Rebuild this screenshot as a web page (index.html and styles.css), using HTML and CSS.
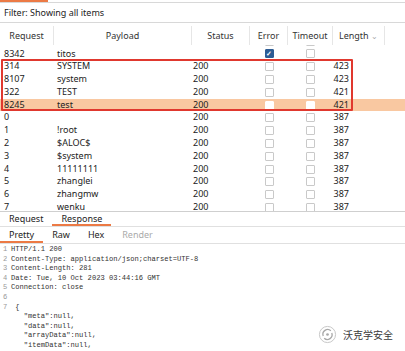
FILE: index.html
```html
<!DOCTYPE html>
<html lang="en">
<head>
  <meta charset="UTF-8" />
  <meta name="viewport" content="width=device-width, initial-scale=1.0"/>
  <title>Intruder results</title>
  <link rel="stylesheet" href="styles.css">
</head>
<body>
  <div class="window">
    <div class="topline"></div>
    <div class="filter">Filter: Showing all items</div>

    <div class="results">
      <div class="thead">
        <div>Request</div>
        <div>Payload</div>
        <div>Status</div>
        <div>Error</div>
        <div>Timeout</div>
        <div>Length <span class="chev">&#8964;</span></div>
      </div>
      <div class="tbody">
        <div class="rows">
          <div class="row"><div>4112</div><div>stanford</div><div>200</div><div><span class="box"></span></div><div><span class="box"></span></div><div class="len">387</div></div>
          <div class="row"><div>8342</div><div>titos</div><div></div><div><span class="box checked">&#10003;</span></div><div><span class="box"></span></div><div class="len"></div></div>
          <div class="row"><div>314</div><div>SYSTEM</div><div>200</div><div><span class="box"></span></div><div><span class="box"></span></div><div class="len">423</div></div>
          <div class="row"><div>8107</div><div>system</div><div>200</div><div><span class="box"></span></div><div><span class="box"></span></div><div class="len">423</div></div>
          <div class="row"><div>322</div><div>TEST</div><div>200</div><div><span class="box"></span></div><div><span class="box"></span></div><div class="len">421</div></div>
          <div class="row selected"><div>8245</div><div>test</div><div>200</div><div><span class="box"></span></div><div><span class="box"></span></div><div class="len">421</div></div>
          <div class="row"><div>0</div><div></div><div>200</div><div><span class="box"></span></div><div><span class="box"></span></div><div class="len">387</div></div>
          <div class="row"><div>1</div><div>!root</div><div>200</div><div><span class="box"></span></div><div><span class="box"></span></div><div class="len">387</div></div>
          <div class="row"><div>2</div><div>$ALOC$</div><div>200</div><div><span class="box"></span></div><div><span class="box"></span></div><div class="len">387</div></div>
          <div class="row"><div>3</div><div>$system</div><div>200</div><div><span class="box"></span></div><div><span class="box"></span></div><div class="len">387</div></div>
          <div class="row"><div>4</div><div>11111111</div><div>200</div><div><span class="box"></span></div><div><span class="box"></span></div><div class="len">387</div></div>
          <div class="row"><div>5</div><div>zhanglei</div><div>200</div><div><span class="box"></span></div><div><span class="box"></span></div><div class="len">387</div></div>
          <div class="row"><div>6</div><div>zhangmw</div><div>200</div><div><span class="box"></span></div><div><span class="box"></span></div><div class="len">387</div></div>
          <div class="row"><div>7</div><div>wenku</div><div>200</div><div><span class="box"></span></div><div><span class="box"></span></div><div class="len">387</div></div>
        </div>
        <div class="mark"></div>
      </div>
    </div>

    <div class="tabs">
      <div class="tab">Request</div>
      <div class="tab active">Response</div>
    </div>
    <div class="subtabs">
      <div class="tab active">Pretty</div>
      <div class="tab">Raw</div>
      <div class="tab">Hex</div>
      <div class="tab off">Render</div>
    </div>

    <div class="editor">
      <div class="ln"><span class="num">1</span>HTTP/1.1 200</div>
      <div class="ln"><span class="num">2</span>Content-Type: application/json;charset=UTF-8</div>
      <div class="ln"><span class="num">3</span>Content-Length: 281</div>
      <div class="ln"><span class="num">4</span>Date: Tue, 10 Oct 2023 03:44:16 GMT</div>
      <div class="ln"><span class="num">5</span>Connection: close</div>
      <div class="ln"><span class="num">6</span></div>
      <div class="ln"><span class="num">7</span> {</div>
      <div class="ln"><span class="num"></span>   "meta":null,</div>
      <div class="ln"><span class="num"></span>   "data":null,</div>
      <div class="ln"><span class="num"></span>   "arrayData":null,</div>
      <div class="ln"><span class="num"></span>   "itemData":null,</div>
    </div>

    <div class="watermark">
      <svg class="logo" width="19" height="19" viewBox="0 0 20 20">
        <circle cx="10" cy="10" r="8.5" fill="#fff" stroke="#c4c4c4" stroke-width="1"/>
        <path d="M5.5 11.5 A5 5 0 0 1 13.5 6" fill="none" stroke="#a8a8a8" stroke-width="1.4"/>
        <path d="M14.5 8.5 A5 5 0 0 1 6.5 14" fill="none" stroke="#a8a8a8" stroke-width="1.4"/>
        <circle cx="10" cy="10" r="1.4" fill="#a8a8a8"/>
      </svg>
      <span>沃克学安全</span>
    </div>
  </div>
</body>
</html>
```

FILE: styles.css
```css
body {
  margin: 0;
  background: #fff;
  font-family: "Noto Sans", Arial, sans-serif;
  color: #222;
}

.window {
  position: relative;
  width: 405px;
  height: 351px;
  overflow: hidden;
}

.topline {
  width: 48px;
  height: 2px;
  background: #ec7a45;
}

.filter {
  height: 19px;
  line-height: 19px;
  padding-left: 4px;
  font-size: 9px;
  border-top: 1px solid #d8d8d8;
  border-bottom: 1px solid #d8d8d8;
  color: #222;
}

.results {
  margin-top: 3px;
}

.thead,
.row {
  display: grid;
  grid-template-columns: 54px 138px 58px 38px 45px 52px 20px;
}

.thead {
  height: 19px;
  line-height: 19px;
  font-size: 9px;
  color: #333;
}

.thead div {
  text-align: center;
  border-right: 1px solid #e6e6e6;
}

.chev {
  color: #aaa;
  font-size: 8px;
}

.tbody {
  position: relative;
  height: 166px;
  overflow: hidden;
  border-bottom: 1px solid #cfcfcf;
}

.rows {
  margin-top: -10.3px;
}

.row {
  height: 12.8px;
  line-height: 12.8px;
  font-size: 9px;
  color: #222;
}

.row div:nth-child(1) {
  padding-left: 4px;
}

.row div:nth-child(2) {
  padding-left: 3px;
}

.row div:nth-child(3) {
  padding-left: 1px;
}

.row div:nth-child(4),
.row div:nth-child(5) {
  display: flex;
  justify-content: center;
  align-items: center;
}

.row .len {
  text-align: right;
  padding-right: 36px;
}

.row.selected {
  background: #f9c8a1;
}

.box {
  width: 7px;
  height: 7px;
  border: 1px solid #c9c9c9;
  border-radius: 1px;
  background: #fff;
  font-size: 7px;
  line-height: 7px;
  text-align: center;
  color: #fff;
}

.box.checked {
  background: #2d5c94;
  border-color: #2d5c94;
  font-weight: bold;
}

.selected .box {
  border-color: #fff;
}

.mark {
  position: absolute;
  left: 1px;
  top: 14px;
  width: 348px;
  height: 48px;
  border: 2px solid #e0382e;
  border-radius: 1px;
}

.tabs,
.subtabs {
  display: flex;
  font-size: 9px;
  border-bottom: 1px solid #e0e0e0;
}

.tabs {
  height: 14px;
  line-height: 14px;
}

.tabs .tab {
  padding: 0 9px;
}

.tabs .tab.active {
  border-bottom: 2px solid #ec7a45;
}

.subtabs {
  height: 16px;
  line-height: 16px;
}

.subtabs .tab {
  padding: 0 9px;
}

.subtabs .tab.active {
  border-bottom: 2px solid #ec7a45;
}

.subtabs .tab.off {
  color: #aaa;
}

.editor {
  padding-top: 1px;
  font-family: "Liberation Mono", "DejaVu Sans Mono", monospace;
  font-size: 7.1px;
  color: #333;
}

.ln {
  height: 9.6px;
  line-height: 9.6px;
  white-space: pre;
}

.num {
  display: inline-block;
  width: 11px;
  padding-left: 3px;
  box-sizing: border-box;
  color: #999;
}

.watermark {
  position: absolute;
  left: 318px;
  top: 325px;
  display: flex;
  align-items: center;
  gap: 6px;
  font-family: "Noto Sans CJK SC", sans-serif;
  font-size: 10px;
  color: #3a3a3a;
  text-shadow: 0 0 2px #fff;
}
```
